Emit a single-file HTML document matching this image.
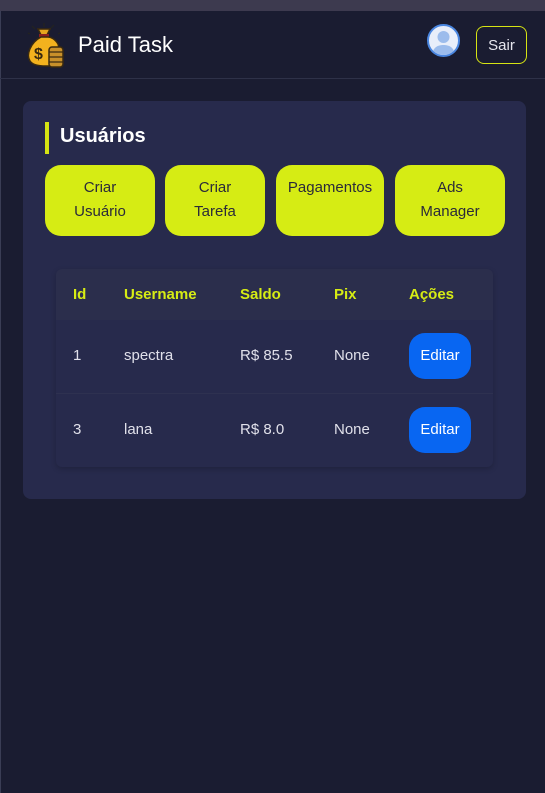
<!DOCTYPE html>
<html><head><meta charset="utf-8"><style>
*{box-sizing:border-box;margin:0;padding:0}
body{width:545px;height:793px;background:#1a1c31;font-family:"Liberation Sans",sans-serif;position:relative;overflow:hidden}
.ln{position:absolute;left:0;top:0;width:1px;height:793px;background:#3a3d55}
.top{position:absolute;left:0;top:0;width:545px;height:11px;background:#3d3a4f}
.hdr{position:absolute;left:0;top:11px;width:545px;height:68px;border-bottom:1px solid #2e3148}
.title{position:absolute;left:78px;top:21px;color:#fff;font-size:22px}
.av{position:absolute;left:427px;top:13px;width:33px;height:33px;border-radius:50%;background:#e8eefa;border:2px solid #4a86e0;overflow:hidden}
.sair{position:absolute;left:476px;top:15px;width:51px;height:38px;border:1px solid #d6e413;border-radius:8px;color:#e6e6ee;font-size:15px;text-align:center;line-height:37px}
.card{position:absolute;left:23px;top:101px;width:503px;height:398px;background:#272a4c;border-radius:8px}
.bar{position:absolute;left:22px;top:21px;width:4px;height:32px;background:#d6e413}
h2{position:absolute;left:37px;top:24px;color:#fff;font-size:20px;font-weight:bold}
.b{position:absolute;top:64px;height:71px;background:#d6ec14;border-radius:16px;color:#2a2a3a;font-size:15px;text-align:center;line-height:24px;padding-top:11px}
.tbl{position:absolute;left:33px;top:168px;width:437px;height:198px;background:#272a4c;border-radius:6px;box-shadow:0 2px 6px rgba(0,0,0,.2)}
.th{position:absolute;left:0;top:0;width:437px;height:51px;background:#2b2e4c;border-radius:6px 6px 0 0}
.c{position:absolute;font-size:15px;color:#e0e0ea}
.h{color:#d6ec14;font-weight:bold;top:17px}
.row{position:absolute;left:0;width:437px;height:74px;border-bottom:1px solid #2e3150}
.ed{position:absolute;left:353px;width:62px;height:46px;background:#0866f2;border-radius:16px;color:#fff;font-size:15px;text-align:center;line-height:46px}
</style></head><body>
<div class="ln"></div>
<div class="top"></div>
<div class="hdr">
<svg style="position:absolute;left:24px;top:10px" width="44" height="48" viewBox="0 0 44 48">
<path d="M8 5l3 3M20 2v4M30 4l-3 3M4 12l2 1M36 12l-2 1" stroke="#222" stroke-width="1.5"/>
<path d="M14 8h12l-3 6h-6z" fill="#e6a51e" stroke="#3a2a10" stroke-width="1.5"/>
<rect x="15" y="13" width="10" height="3" fill="#8a2020"/>
<path d="M17 16C6 22 2 34 6 40c3 5 12 5 16 5h8c4-3 8-10 4-22-3-5-7-7-10-7z" fill="#f3b21e" stroke="#3a2a10" stroke-width="1.5"/>
<text x="10" y="38" font-size="16" font-weight="bold" fill="#3a2a10" font-family="Liberation Sans">$</text>
<rect x="25" y="26" width="14" height="20" rx="3" fill="#c8902a" stroke="#3a2a10" stroke-width="1.5"/>
<path d="M25 31h14M25 36h14M25 41h14" stroke="#3a2a10" stroke-width="1.2"/>
</svg>
<div class="title">Paid Task</div>
<div class="av"><svg width="29" height="29" viewBox="0 0 29 29"><circle cx="14.5" cy="11" r="6" fill="#9cbcec"/><path d="M3 29c1-8 6-10 11.5-10S25 21 26 29z" fill="#9cbcec"/></svg></div>
<div class="sair">Sair</div>
</div>
<div class="card">
<div class="bar"></div><h2>Usuários</h2>
<div class="b" style="left:22px;width:110px">Criar<br>Usuário</div>
<div class="b" style="left:142px;width:100px">Criar<br>Tarefa</div>
<div class="b" style="left:253px;width:108px">Pagamentos</div>
<div class="b" style="left:372px;width:110px">Ads<br>Manager</div>
<div class="tbl">
<div class="th">
<div class="c h" style="left:17px">Id</div><div class="c h" style="left:68px">Username</div><div class="c h" style="left:184px">Saldo</div><div class="c h" style="left:278px">Pix</div><div class="c h" style="left:353px">Ações</div>
</div>
<div class="row" style="top:51px">
<div class="c" style="left:17px;top:27px">1</div><div class="c" style="left:68px;top:27px">spectra</div><div class="c" style="left:184px;top:27px">R$ 85.5</div><div class="c" style="left:278px;top:27px">None</div><div class="ed" style="top:13px">Editar</div>
</div>
<div class="row" style="top:125px;border-bottom:none">
<div class="c" style="left:17px;top:27px">3</div><div class="c" style="left:68px;top:27px">lana</div><div class="c" style="left:184px;top:27px">R$ 8.0</div><div class="c" style="left:278px;top:27px">None</div><div class="ed" style="top:13px">Editar</div>
</div>
</div>
</div>
</body></html>
